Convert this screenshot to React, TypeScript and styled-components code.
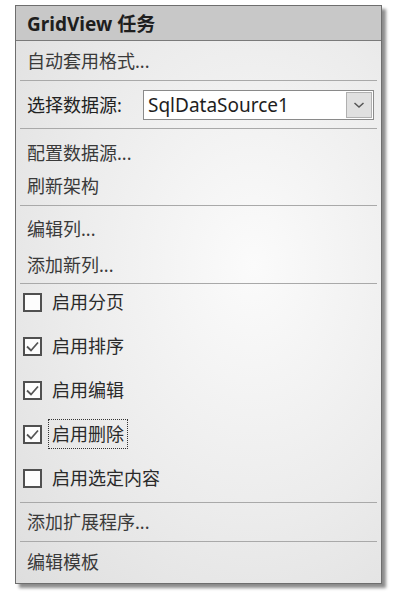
import React from "react";
import styled, { createGlobalStyle } from "styled-components";

const Global = createGlobalStyle`
  html, body { margin: 0; padding: 0; background: #ffffff; }
  body { font-family: "Noto Sans", "Noto Sans CJK SC", sans-serif; }
`;

const Page = styled.div`
  padding: 5px 0 0 15px;
  width: 405px;
  height: 595px;
  box-sizing: border-box;
`;

const Panel = styled.div`
  width: 367px;
  box-sizing: border-box;
  border: 1px solid #6e6e6e;
  box-shadow: 4px 4px 3px rgba(0, 0, 0, 0.45);
  background: radial-gradient(ellipse at 65% 45%, #fbfbfb 0%, #ececec 55%, #dedede 100%);
  display: flex;
  flex-direction: column;
`;

const Header = styled.div`
  height: 34px;
  background: #c8c8c8;
  border-bottom: 1px solid #7a7a7a;
  display: flex;
  align-items: center;
  padding-left: 11px;
  font-family: "Noto Sans", "Noto Sans CJK SC", sans-serif;
  font-weight: 700;
  font-size: 19px;
  color: #1e1e1e;
`;

const Section = styled.div<{ $pt?: number; $pb?: number; $last?: boolean; $gap?: number }>`
  display: flex;
  flex-direction: column;
  gap: ${(p) => p.$gap ?? 0}px;
  padding: ${(p) => p.$pt ?? 0}px 0 ${(p) => p.$pb ?? 0}px;
  margin: 0 4px;
  border-bottom: ${(p) => (p.$last ? "none" : "1px solid #a9a9a9")};
`;

const LinkRow = styled.div<{ $h: number }>`
  height: ${(p) => p.$h}px;
  box-sizing: border-box;
  display: flex;
  align-items: center;
  padding: 0 0 3px 7px;
  font-size: 18px;
  color: #3a3a3a;
`;

const SelectRow = styled.div`
  height: 47px;
  display: flex;
  align-items: center;
  padding-left: 7px;
  font-size: 18px;
  color: #222;
`;

const SelectLabel = styled.span`
  width: 116px;
  padding-bottom: 2px;
`;

const SelectBox = styled.div`
  width: 231px;
  height: 30px;
  box-sizing: border-box;
  border: 1px solid #8a8a8a;
  background: #ffffff;
  display: flex;
  align-items: center;
  justify-content: space-between;
  padding: 0 1px 0 4px;
  font-size: 19px;
  color: #1e1e1e;
`;

const DropButton = styled.div`
  width: 26px;
  height: 26px;
  box-sizing: border-box;
  border: 1px solid #b0b0b0;
  background: #e0e0e0;
  display: flex;
  align-items: center;
  justify-content: center;
`;

const CheckRow = styled.div`
  height: 36px;
  display: flex;
  align-items: center;
  padding-left: 3px;
  gap: 6px;
  font-size: 18px;
  color: #2a2a2a;
`;

const Box = styled.div`
  width: 19px;
  height: 19px;
  box-sizing: border-box;
  border: 2px solid #505050;
  background: #fdfdfd;
  display: flex;
  align-items: center;
  justify-content: center;
`;

const Label = styled.span<{ $focus?: boolean }>`
  padding: 0 3px 2px;
  border: 1px ${(p) => (p.$focus ? "dotted #333" : "solid transparent")};
`;

const Check = ({ on }: { on: boolean }) => (
  <Box>
    {on && (
      <svg width="15" height="15" viewBox="0 0 15 15">
        <path d="M2 7.5 L6 11.5 L13 3.5" fill="none" stroke="#555" strokeWidth="1.8" />
      </svg>
    )}
  </Box>
);

const checks = [
  { t: "启用分页", on: false },
  { t: "启用排序", on: true },
  { t: "启用编辑", on: true },
  { t: "启用删除", on: true, focus: true },
  { t: "启用选定内容", on: false },
];

export default function App() {
  return (
    <>
      <Global />
      <Page>
        <Panel>
          <Header>GridView 任务</Header>
          <Section $pt={1}>
            <LinkRow $h={38}>自动套用格式...</LinkRow>
          </Section>
          <Section>
            <SelectRow>
              <SelectLabel>选择数据源:</SelectLabel>
              <SelectBox>
                <span>SqlDataSource1</span>
                <DropButton>
                  <svg width="12" height="8" viewBox="0 0 12 8">
                    <path d="M1.5 2 L6 6 L10.5 2" fill="none" stroke="#555" strokeWidth="1.5" />
                  </svg>
                </DropButton>
              </SelectBox>
            </SelectRow>
          </Section>
          <Section $pt={7} $pb={2}>
            <LinkRow $h={34}>配置数据源...</LinkRow>
            <LinkRow $h={33}>刷新架构</LinkRow>
          </Section>
          <Section $pt={5}>
            <LinkRow $h={36}>编辑列...</LinkRow>
            <LinkRow $h={36}>添加新列...</LinkRow>
          </Section>
          <Section $gap={8} $pb={6}>
            {checks.map((c) => (
              <CheckRow key={c.t}>
                <Check on={c.on} />
                <Label $focus={c.focus}>{c.t}</Label>
              </CheckRow>
            ))}
          </Section>
          <Section>
            <LinkRow $h={38}>添加扩展程序...</LinkRow>
          </Section>
          <Section $last>
            <LinkRow $h={41}>编辑模板</LinkRow>
          </Section>
        </Panel>
      </Page>
    </>
  );
}
